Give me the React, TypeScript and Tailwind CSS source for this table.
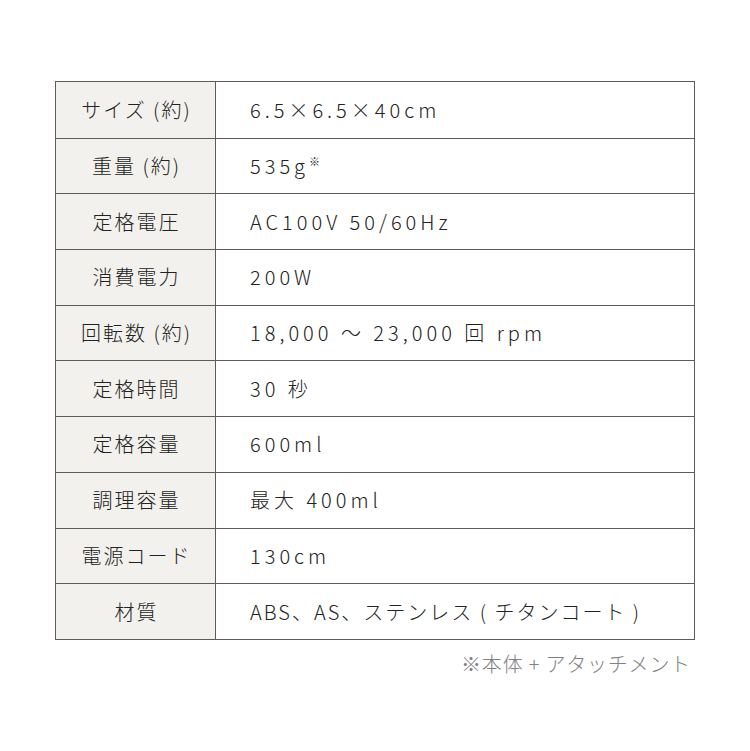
const rows: { label: string; value: React.ReactNode; tight?: boolean }[] = [
  { label: 'サイズ (約)', value: '6.5×6.5×40cm' },
  {
    label: '重量 (約)',
    value: (
      <>
        535g<sup className="text-[11px] align-[9px] tracking-normal">※</sup>
      </>
    ),
  },
  { label: '定格電圧', value: 'AC100V 50/60Hz' },
  { label: '消費電力', value: '200W' },
  { label: '回転数 (約)', value: '18,000 ～ 23,000 回 rpm' },
  { label: '定格時間', value: '30 秒' },
  { label: '定格容量', value: '600ml' },
  { label: '調理容量', value: '最大 400ml' },
  { label: '電源コード', value: '130cm' },
  { label: '材質', value: 'ABS、AS、ステンレス ( チタンコート )', tight: true },
];

export default function App() {
  return (
    <div
      className="w-[750px] h-[751px] bg-white pt-[81px] pl-[55px]"
      style={{ fontFamily: '"Noto Sans CJK JP", "Noto Sans", sans-serif' }}
    >
      <div className="w-[640px] border border-[#5c5c5c] text-[#222] font-light">
        {rows.map((r, i) => (
          <div
            key={r.label}
            className={`flex h-[55.7px] ${i > 0 ? 'border-t border-[#5c5c5c]' : ''}`}
          >
            <div className="w-[160px] shrink-0 bg-[#f3f1ed] border-r border-[#5c5c5c] flex items-center justify-center pl-[2px] text-[20px] tracking-[0.1em]">
              {r.label}
            </div>
            <div
              className={`flex-1 flex items-center pl-[34px] text-[20px] whitespace-nowrap ${
                r.tight ? 'tracking-[0.1em]' : 'tracking-[0.2em]'
              }`}
            >
              {r.value}
            </div>
          </div>
        ))}
      </div>
      <div className="w-[636px] text-right pt-[9px] text-[20px] tracking-[0.04em] text-[#808080] font-light">
        ※本体 + アタッチメント
      </div>
    </div>
  );
}
